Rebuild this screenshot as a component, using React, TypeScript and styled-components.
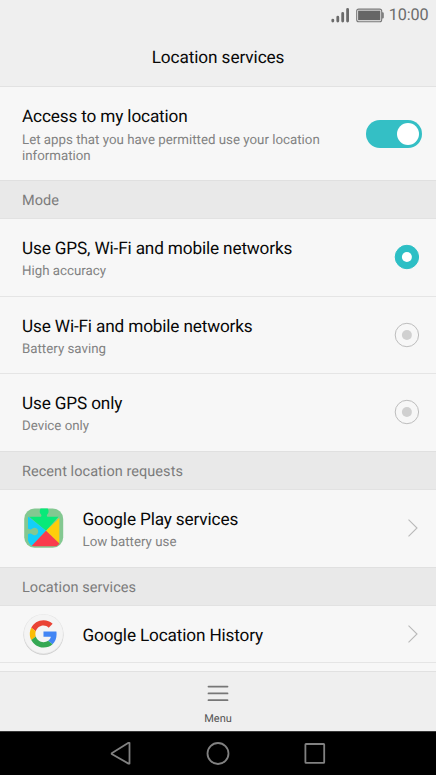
import React from "react";
import styled, { createGlobalStyle } from "styled-components";

const GlobalStyle = createGlobalStyle`
  * { box-sizing: border-box; }
  body { margin: 0; background: #f7f7f7; }
`;

const Screen = styled.div`
  width: 436px;
  height: 775px;
  overflow: hidden;
  display: flex;
  flex-direction: column;
  background: #f7f7f7;
  font-family: Roboto, "Liberation Sans", sans-serif;
  text-rendering: geometricPrecision;
  color: #080808;
`;

const StatusBar = styled.div`
  height: 30px;
  flex: none;
  display: flex;
  align-items: center;
  justify-content: flex-end;
  padding-right: 7.5px;
  background: #efefef;
`;

const Clock = styled.span`
  margin-left: 5px;
  font-size: 16.2px;
  line-height: 30px;
  letter-spacing: -0.1px;
  color: #6c6c6c;
`;

const Header = styled.h1`
  margin: 0;
  height: 57px;
  flex: none;
  background: #efefef;
  border-bottom: 1px solid #e2e2e2;
  font-size: 17.2px;
  font-weight: 400;
  line-height: 57px;
  letter-spacing: -0.09px;
  text-align: center;
`;

const List = styled.main`
  flex: 1;
  min-height: 0;
  overflow: hidden;
`;

const Row = styled.div<{ $height: number; $last?: boolean }>`
  height: ${(p) => p.$height}px;
  padding: 17px 0 0 22px;
  display: flex;
  align-items: flex-start;
  border-bottom: ${(p) => (p.$last ? "0" : "1px solid #e5e5e5")};
`;

const Texts = styled.div`
  flex: 1;
  min-width: 0;
  padding-top: 1px;
`;

const Title = styled.div`
  font-size: 17.2px;
  line-height: 24px;
  letter-spacing: -0.15px;
  white-space: nowrap;
`;

const Summary = styled.div<{ $gap?: number }>`
  margin-top: ${(p) => p.$gap ?? 3}px;
  max-width: 310px;
  font-size: 13.3px;
  line-height: 16px;
  color: #828282;
`;

const Section = styled.h2`
  margin: 0;
  height: 39px;
  padding-left: 22px;
  background: #e9e9e9;
  border-top: 1px solid #e0e0e0;
  border-bottom: 1px solid #e2e2e2;
  font-size: 14.5px;
  font-weight: 400;
  line-height: 40px;
  letter-spacing: 0.05px;
  color: #7c7c7c;
`;

const Toggle = styled.div`
  width: 56px;
  height: 28px;
  margin: 15.5px 14.5px 0 0;
  padding: 3px;
  display: flex;
  justify-content: flex-end;
  border-radius: 14px;
  background: #34bfc5;
`;

const Knob = styled.div`
  width: 22px;
  height: 22px;
  border-radius: 50%;
  background: #fff;
`;

const RadioIcon = styled.svg`
  width: 26px;
  height: 26px;
  margin: 8px 16px 0 0;
`;

const Radio = ({ on }: { on: boolean }) => (
  <RadioIcon viewBox="0 0 26 26">
    <circle cx="12.9" cy="13" r="11.7" fill={on ? "#2dbfc5" : "none"} stroke={on ? "#2dbfc5" : "#bdbdbd"} />
    <circle cx="12.9" cy="13" r="5" fill={on ? "#fff" : "#d0d0d0"} />
  </RadioIcon>
);

const AppIcon = styled.svg<{ $top: number }>`
  flex: none;
  width: 44px;
  height: 44px;
  margin: ${(p) => p.$top}px 17.5px 0 -1px;
`;

const ArrowIcon = styled.svg<{ $top: number }>`
  width: 12px;
  height: 20px;
  margin: ${(p) => p.$top}px 17px 0 0;
`;

const Arrow = ({ top }: { top: number }) => (
  <ArrowIcon $top={top} viewBox="0 0 12 20" fill="none" stroke="#b9b9b9" strokeWidth="1.1">
    <path d="M1.5 1.7 10 10 1.5 18.3" />
  </ArrowIcon>
);

const MenuBar = styled.button`
  height: 60px;
  flex: none;
  padding: 0;
  display: flex;
  flex-direction: column;
  align-items: center;
  justify-content: flex-start;
  border: 0;
  border-top: 1px solid #e1e1e1;
  background: #efefef;
  font-family: inherit;
  text-rendering: inherit;
  font-size: 11px;
  line-height: 14px;
  letter-spacing: 0;
  color: #555;
`;

const MenuIcon = styled.svg`
  width: 22px;
  height: 17px;
  margin: 12.5px 0 10.5px;
`;

const NavBar = styled.nav`
  height: 44px;
  flex: none;
  display: flex;
  justify-content: center;
  gap: 73px;
  padding-top: 10px;
  border-top: 1px solid #383838;
  background: #000;
`;

const NavIcon = styled.svg`
  width: 24px;
  height: 24px;
  margin-top: -1px;
  fill: none;
  stroke: #818181;
  stroke-width: 1.8;
  stroke-linejoin: round;
`;

const modes = [
  { title: "Use GPS, Wi-Fi and mobile networks", summary: "High accuracy", on: true, height: 78 },
  { title: "Use Wi-Fi and mobile networks", summary: "Battery saving", on: false, height: 77 },
  { title: "Use GPS only", summary: "Device only", on: false, height: 77 },
];

export default function App() {
  return (
    <Screen>
      <GlobalStyle />
      <StatusBar>
        <svg width="54" height="18" viewBox="0 0 54 18">
          <g stroke="#6b6b6b" strokeWidth="2.8" strokeLinecap="round">
            <path d="M2.8 14.1v1M7.8 11.2v3.9M12.7 7.5v7.6M17.6 3.3v11.8" />
          </g>
          <rect x="26.7" y="3.1" width="25" height="12.6" rx="2" fill="none" stroke="#777" strokeWidth="1.1" />
          <rect x="28.1" y="4.6" width="22.2" height="9.6" fill="#666" />
          <path d="M52.2 6.2c1.5 0 1.5.7 1.5 1.5v3.4c0 .8 0 1.5-1.5 1.5z" fill="#6b6b6b" />
        </svg>
        <Clock>10:00</Clock>
      </StatusBar>
      <Header>Location services</Header>
      <List>
        <Row $height={93} $last>
          <Texts>
            <Title>Access to my location</Title>
            <Summary $gap={4}>Let apps that you have permitted use your location information</Summary>
          </Texts>
          <Toggle><Knob /></Toggle>
        </Row>
        <Section>Mode</Section>
        {modes.map((m, i) => (
          <Row key={m.title} $height={m.height} $last={i === 2}>
            <Texts>
              <Title>{m.title}</Title>
              <Summary>{m.summary}</Summary>
            </Texts>
            <Radio on={m.on} />
          </Row>
        ))}
        <Section>Recent location requests</Section>
        <Row $height={77} $last>
          <AppIcon $top={-1} viewBox="0 0 44 44">
            <rect x="3.2" y="2.4" width="39" height="39.4" rx="10.5" fill="#83c891" />
            <path d="M8.2 10.8H20C20.7 9.7 20.5 8.7 19.5 7.8 18.3 6.3 18.6 4 19.6 2.4H26.7C27.7 4 28 6.3 26.8 7.8 25.8 8.7 25.6 9.7 26.3 10.8H37.5L25 24.7Z" fill="#08e979" />
            <path d="M7.5 10.8 25 24.7 11.3 40C8.8 38.6 7.4 36.6 7 34V28.2C8.7 27.2 10.2 27.5 11.1 28.2 13 30 17.2 29.3 17.2 25.5S13 21 11.1 22.8C10.2 23.5 8.7 23.8 7 22.8V11.3Z" fill="#13cff9" />
            <path d="M38.3 12v25.5L25 24.7Z" fill="#ffcd0b" />
            <path d="M25 24.7 38.3 37.5C37.5 39 36.3 40 34.5 40.3H12.5L10.8 39.7Z" fill="#fa3b4d" />
          </AppIcon>
          <Texts>
            <Title>Google Play services</Title>
            <Summary>Low battery use</Summary>
          </Texts>
          <Arrow top={11} />
        </Row>
        <Section>Location services</Section>
        <Row $height={57}>
          <AppIcon $top={-11} viewBox="0 0 44 44">
            <circle cx="22.5" cy="22.8" r="20" fill="#c9c9c9" />
            <circle cx="22.5" cy="22" r="20" fill="#e5e5e5" />
            <circle cx="22.5" cy="21.8" r="19.4" fill="#f4f4f4" />
            <g transform="translate(8.8 8.2) scale(.57)">
              <path fill="#EA4335" d="M24 9.5c3.54 0 6.71 1.22 9.21 3.6l6.85-6.85C35.9 2.38 30.47 0 24 0 14.62 0 6.51 5.38 2.56 13.22l7.98 6.19C12.43 13.72 17.74 9.5 24 9.5z" />
              <path fill="#4285F4" d="M46.98 24.55c0-1.57-.15-3.09-.38-4.55H24v9.02h12.94c-.58 2.96-2.26 5.48-4.78 7.18l7.73 6c4.51-4.18 7.09-10.36 7.09-17.65z" />
              <path fill="#FBBC05" d="M10.53 28.59c-.48-1.45-.76-2.99-.76-4.59s.27-3.14.76-4.59l-7.98-6.19C.92 16.46 0 20.12 0 24c0 3.88.92 7.54 2.56 10.78l7.97-6.19z" />
              <path fill="#34A853" d="M24 48c6.48 0 11.93-2.13 15.89-5.81l-7.73-6c-2.15 1.45-4.92 2.3-8.16 2.3-6.26 0-11.57-4.22-13.47-9.91l-7.98 6.19C6.51 42.62 14.62 48 24 48z" />
            </g>
          </AppIcon>
          <Texts>
            <Title>Google Location History</Title>
          </Texts>
          <Arrow top={1} />
        </Row>
      </List>
      <MenuBar>
        <MenuIcon viewBox="0 0 22 17" stroke="#777" strokeWidth="1.8" strokeLinecap="round">
          <path d="M1.5 1.6h19M1.5 8.4h19M1.5 15.2h19" />
        </MenuIcon>
        Menu
      </MenuBar>
      <NavBar>
        <NavIcon viewBox="0 0 24 24"><path d="M2.7 12.3 19.5 1.8h1v20.8h-1L2.7 13Z" /></NavIcon>
        <NavIcon viewBox="0 0 24 24"><circle cx="12" cy="12.5" r="10.5" /></NavIcon>
        <NavIcon viewBox="0 0 24 24"><rect x="2.4" y="3" width="18.8" height="18.8" rx=".6" /></NavIcon>
      </NavBar>
    </Screen>
  );
}
